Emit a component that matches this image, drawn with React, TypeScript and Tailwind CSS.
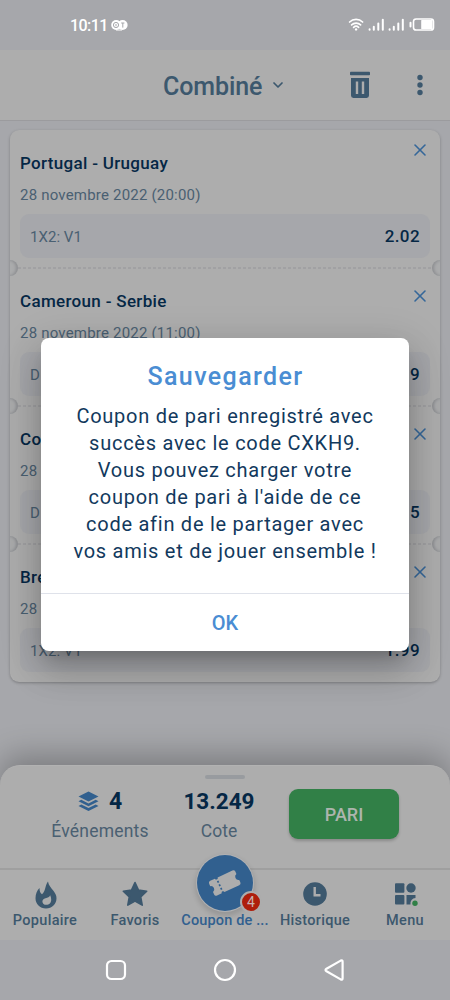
import { ReactNode } from 'react';
import { X, ChevronDown } from 'lucide-react';
import clsx from 'clsx';

interface Bet {
    teams: string;
    date: string;
    market: string;
    odds: string;
}

const bets: Bet[] = [
    { teams: 'Portugal - Uruguay', date: '28 novembre 2022 (20:00)', market: '1X2: V1', odds: '2.02' },
    { teams: 'Cameroun - Serbie', date: '28 novembre 2022 (11:00)', market: 'D', odds: '9' },
    { teams: 'Co', date: '28', market: 'D', odds: '5' },
    { teams: 'Bre', date: '28', market: '1X2: V1', odds: '1.99' },
];

function StatusBar() {
    return (
        <div className="flex h-[50px] shrink-0 items-center justify-between bg-[#a6a7ab] pr-[15px] pl-[70px] text-white">
            <div className="flex items-center gap-[3px]">
                <span className="pt-0.5 text-[16px] leading-none font-medium tracking-[-0.55px]">10:11</span>
                <svg width="17" height="11" viewBox="0 0 17 11">
                    <circle cx="5.2" cy="5" r="5" fill="#fff" />
                    <circle cx="11.6" cy="5" r="5" fill="#fff" />
                    <circle cx="5" cy="5" r="2.6" fill="none" stroke="#a6a7ab" strokeWidth="1" />
                    <path d="M5 4v2.2M10.2 3h3.2M11.8 3v4.6" stroke="#a6a7ab" strokeWidth="1" />
                    <path d="M5 10h6" stroke="#fff" strokeWidth="1" />
                </svg>
            </div>
            <svg width="87" height="16" viewBox="0 0 87 16" fill="none" stroke="#fff" strokeLinecap="round">
                <path d="M1.6 5a9.4 9.4 0 0 1 13 0M3.6 7.8a6.6 6.6 0 0 1 9 0M5.6 10.4a3.6 3.6 0 0 1 5 0" strokeWidth="1.7" />
                <circle cx="8.1" cy="12.4" r="1.2" fill="#fff" stroke="none" />
                <path d="M21.6 12.3v.4M25.8 9.8v2.900M30.3 6.5v6.200M34.8 2.800v9.900" strokeWidth="2" />
                <path d="M41.6 12.3v.4M45.8 9.8v2.900M50.3 6.5v6.200M54.8 2.800v9.900" strokeWidth="2" />
                <path d="M62.5 5.800v3.600" strokeWidth="2" />
                <rect x="65.5" y="2" width="20" height="11" rx="2.6" strokeWidth="1.6" />
                <rect x="73.2" y="3" width="11.4" height="9" rx=".6" fill="#fff" stroke="none" />
            </svg>
        </div>
    );
}

function Header() {
    return (
        <header className="flex h-[71px] shrink-0 items-center border-b border-[#9b9b9e] bg-[#adadad] pr-[26px] pl-[163px] text-[#3c586e]">
            <h1 className="w-[107px] pt-1 text-[25px] font-medium tracking-[-0.1px] whitespace-nowrap">Combiné</h1>
            <ChevronDown className="h-4 w-4" strokeWidth={2.6} />
            <svg className="ml-[64px]" width="20" height="28" viewBox="0 0 20 28" fill="currentColor">
                <rect x="0" y=".8" width="20" height="3.4" rx=".8" />
                <path
                    fillRule="evenodd"
                    d="M1 7h18v17.6a2.4 2.4 0 0 1-2.4 2.4H3.4a2.4 2.4 0 0 1-2.4-2.4zM5.8 10.5v12.5h2.4v-12.5zM11.8 10.5v12.5h2.4v-12.5z"
                />
            </svg>
            <svg className="ml-auto" width="8" height="24" viewBox="0 0 8 24" fill="currentColor">
                <circle cx="4" cy="4.5" r="2.7" />
                <circle cx="4" cy="12" r="2.7" />
                <circle cx="4" cy="19.5" r="2.7" />
            </svg>
        </header>
    );
}

function BetItem({ bet, first }: { bet: Bet; first: boolean }) {
    return (
        <li className="relative h-[138px] px-2.5 pt-[22px]">
            {!first && (
                <>
                    <div className="absolute top-[-1px] right-2 left-2 h-0.5 bg-[repeating-linear-gradient(90deg,#a1a1a3_0_3px,transparent_3px_5px)]" />
                    <span className="absolute -top-2 left-0 h-4 w-2 overflow-hidden">
                        <span className="block h-4 w-4 -translate-x-1/2 rounded-full bg-[#aaabac] shadow-[inset_-2px_0_3px_#8e8f92]" />
                    </span>
                    <span className="absolute -top-2 right-0 h-4 w-2 overflow-hidden">
                        <span className="block h-4 w-4 rounded-full bg-[#aaabac] shadow-[inset_2px_0_3px_#8e8f92]" />
                    </span>
                </>
            )}
            <X
                className={clsx('absolute right-[10px] h-5 w-5 text-[#356799]', first ? 'top-[10px]' : 'top-[18px]')}
                strokeWidth={1.9}
            />
            <h2 className="text-[17px] leading-[22px] font-medium tracking-[0.32px] text-[#052745]">{bet.teams}</h2>
            <p className="mt-[11px] text-[15px] leading-5 tracking-[0.2px] text-[#4a6072]">{bet.date}</p>
            <div className="mt-[9px] flex h-11 items-center justify-between rounded-[9px] bg-[#a6a7ab] px-2.5 pt-0.5">
                <span className="text-[15px] tracking-[0.05px] text-[#4a6072]">{bet.market}</span>
                <span className="text-[17px] font-medium tracking-[0.4px] text-[#052745]">{bet.odds}</span>
            </div>
        </li>
    );
}

function NavItem({ label, active, children }: { label: string; active?: boolean; children?: ReactNode }) {
    return (
        <div
            className={clsx(
                'flex w-[90px] flex-col items-center text-[14.5px] leading-[18px] font-medium tracking-[0.3px] whitespace-nowrap',
                active ? 'text-[#31608f]' : 'text-[#3c586e]'
            )}
        >
            <div className="mb-px flex h-[33px] items-center">{children}</div>
            <span className={clsx(active && 'tracking-[0.15px]')}>{label}</span>
        </div>
    );
}

function BottomSheet() {
    return (
        <div className="h-[103px] shrink-0 rounded-t-[20px] border-t border-[#b2b2b2] bg-[#adadad] shadow-[0_-10px_30px_rgba(0,0,0,0.25)]">
            <div className="mx-auto mt-[9px] h-1 w-10 rounded-full bg-[#989b9f]" />
            <div className="flex pl-[45px]">
                <div className="flex w-[110px] flex-col items-center">
                    <div className="mt-[10px] flex h-[26px] items-center gap-[10px]">
                        <svg className="-mt-0.5" width="21" height="21" viewBox="0 0 21 21" fill="#31608f">
                            <path d="M10.5 .5 20.5 5.5 10.5 10.5 .5 5.5z" />
                            <path d="m.5 10.2 2.8-1.4 7.2 3.6 7.2-3.6 2.8 1.4-10 5z" />
                            <path d="m.5 14.9 2.8-1.4 7.2 3.6 7.2-3.6 2.8 1.4-10 5z" />
                        </svg>
                        <span className="text-[23px] font-bold text-[#052745]">4</span>
                    </div>
                    <span className="mt-[4px] text-[17.5px] leading-6 tracking-[0.2px] text-[#4a6072]">Événements</span>
                </div>
                <div className="ml-[18px] flex w-[92px] flex-col items-center">
                    <span className="mt-[9px] text-[22.5px] leading-[26px] font-bold text-[#052745]">13.249</span>
                    <span className="mt-[5px] text-[17.5px] leading-6 text-[#4a6072]">Cote</span>
                </div>
                <button className="mt-[10px] ml-[24px] h-[50px] w-[110px] rounded-[9px] bg-[#318047] text-[18px] font-medium text-[#adb5ae] shadow-[0_2px_3px_rgba(0,0,0,0.2)]">
                    PARI
                </button>
            </div>
        </div>
    );
}

function BottomNav() {
    return (
        <nav className="relative h-[72px] shrink-0 border-t-2 border-[#9f9f9f] bg-[#adadad] pt-[8px]">
            <div className="flex">
                <NavItem label="Populaire">
                    <svg className="ml-[1px]" width="22" height="28" viewBox="0 0 22 28" fill="currentColor">
                        <path
                            fillRule="evenodd"
                            d="M13 .5c.5 4 3.3 6.3 5.4 9.3 2 2.7 3.1 4.7 3.1 7.5C21.5 23.2 17 27.500 11 27.500S.5 23.200.5 17.300C.5 12.900 2 9.500 4.500 7c0 3.200.9 5.200 2.500 6.300C10.800 10.100 9.900 4.700 13 .5zM15.200 14.200c-.8 2-2.500 2.300-4.700 3-2 .6-3.100 1.700-3.100 3.200 0 1.900 1.600 3.400 3.900 3.400 3 0 4.900-2 4.900-5 0-1.600-.3-3-1-4.600z"
                        />
                    </svg>
                </NavItem>
                <NavItem label="Favoris">
                    <svg className="-mt-0.5" width="26" height="26" viewBox="0 0 26 26" fill="currentColor" stroke="currentColor" strokeWidth="1.6" strokeLinejoin="round">
                        <path d="m13 1.5 3.5 7.6 8.2 1.1-6 5.7 1.5 8.2-7.2-4-7.2 4 1.5-8.2-6-5.7 8.2-1.1z" />
                    </svg>
                </NavItem>
                <NavItem label="Coupon de ..." active />
                <NavItem label="Historique">
                    <svg className="-mt-px" width="24" height="24" viewBox="0 0 24 24">
                        <circle cx="12" cy="12" r="11.8" fill="currentColor" />
                        <path d="M11.7 5v8.2h5.8" fill="none" stroke="#adadad" strokeWidth="2.4" />
                    </svg>
                </NavItem>
                <NavItem label="Menu">
                    <svg className="mt-px ml-[3px]" width="24" height="24" viewBox="0 0 24 24" fill="currentColor">
                        <rect x="0" y=".3" width="9.4" height="9.4" rx="1" />
                        <circle cx="16" cy="5" r="4.7" />
                        <rect x="0" y="12" width="9.4" height="9.4" rx="1" />
                        <path d="M11.5 12h9v3a5.4 5.4 0 0 0-5 6.4h-4z" />
                        <circle cx="20" cy="20.3" r="2.7" fill="#318047" />
                    </svg>
                </NavItem>
            </div>

            {/* Floating coupon button */}
            <div className="absolute -top-[15px] left-[197px] h-14 w-14 rounded-full bg-[#31608f] shadow-[0_0_0_1px_#b0b1b3,0_3px_5px_2px_rgba(0,0,0,0.13)]">
                <svg width="56" height="56" viewBox="0 0 56 56">
                    <g transform="rotate(-25 28 28)" fill="#adadad">
                        <path d="M15.5 19.8h5.2a1.5 1.5 0 0 0 3 0h16.3a2.2 2.2 0 0 1 2.2 2.2v2.6a3.4 3.4 0 0 0 0 6.600v2.600a2.200 2.200 0 0 1-2.200 2.200h-16.300a1.500 1.500 0 0 0-3 0h-5.200a2.200 2.200 0 0 1-2.200-2.200v-2.600a3.400 3.400 0 0 0 0-6.600v-2.600a2.200 2.200 0 0 1 2.200-2.200z" />
                        <path d="M22.200 23v11" stroke="#31608f" strokeWidth="1.7" strokeDasharray="2 1.8" />
                    </g>
                </svg>
                <span className="absolute top-[36px] left-[43px] flex h-[22px] w-[22px] items-center justify-center rounded-full border-2 border-[#adadad] bg-[#ae1e0b] text-[14px] leading-none text-[#c9b3b0]">
                    4
                </span>
            </div>
        </nav>
    );
}

function SystemNav() {
    return (
        <div className="flex h-[60px] shrink-0 items-center justify-center gap-[86px] bg-[#a6a7ab]">
            <svg width="24" height="24" viewBox="0 0 24 24" fill="none" stroke="#fff" strokeWidth="2.2">
                <rect x="4" y="3" width="18" height="18" rx="4.5" />
            </svg>
            <svg width="24" height="24" viewBox="0 0 24 24" fill="none" stroke="#fff" strokeWidth="2.2">
                <circle cx="12" cy="12" r="10" />
            </svg>
            <svg width="24" height="24" viewBox="0 0 24 24" fill="none" stroke="#fff" strokeWidth="2.2" strokeLinejoin="round">
                <path d="M3.5 10.7 17.7 2.6Q19.6 1.7 19.6 3.7v16.6q0 2-1.9 1.1L3.5 13.3q-2-1.3 0-2.6z" />
            </svg>
        </div>
    );
}

function SaveDialog() {
    return (
        <div
            role="dialog"
            className="absolute top-[338px] left-[41px] flex h-[313px] w-[368px] flex-col rounded-lg bg-white text-center shadow-[0_11px_15px_-7px_rgba(0,0,0,0.2),0_20px_34px_3px_rgba(0,0,0,0.16),0_9px_40px_6px_rgba(0,0,0,0.1)]"
        >
            <h2 className="mt-[22px] pt-px pl-px text-[25px] leading-8 font-medium tracking-[1.4px] text-[#4a8dd3]">Sauvegarder</h2>
            <p className="mt-[10px] text-[20px] leading-[27px] tracking-[0.74px] whitespace-nowrap text-[#12395d]">
                Coupon de pari enregistré avec
                <br />
                succès avec le code CXKH9.
                <br />
                Vous pouvez charger votre
                <br />
                coupon de pari à l'aide de ce
                <br />
                code afin de le partager avec
                <br />
                vos amis et de jouer ensemble !
            </p>
            <button className="mt-auto h-[58px] border-t border-[#dfe2ea] pt-px text-[20px] font-medium text-[#4a8dd3]">OK</button>
        </div>
    );
}

export default function App() {
    return (
        <div className="relative flex h-[1000px] w-[450px] flex-col overflow-hidden bg-[#a6a7ab] font-['Roboto',sans-serif]">
            <StatusBar />
            <Header />
            <main className="h-[644px] shrink-0 px-2.5 pt-[9px]">
                <ul className="h-[552px] rounded-[9px] bg-[#adadad] shadow-[0_1px_3px_rgba(0,0,0,0.25)]">
                    {bets.map((bet, index) => (
                        <BetItem key={index} bet={bet} first={index === 0} />
                    ))}
                </ul>
            </main>
            <BottomSheet />
            <BottomNav />
            <SystemNav />
            <SaveDialog />
        </div>
    );
}
